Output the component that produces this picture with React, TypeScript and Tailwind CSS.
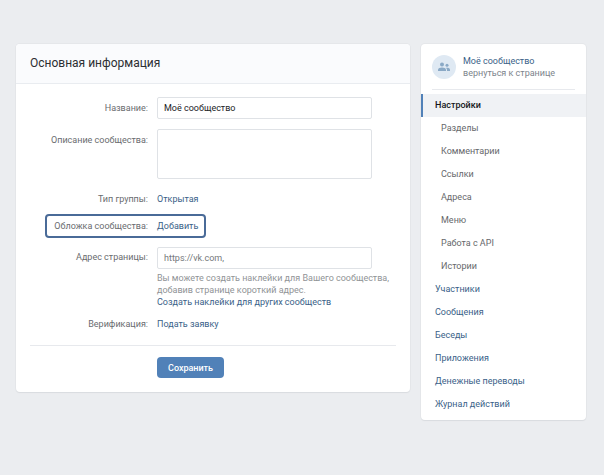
import React from 'react';

const sections = ['Разделы', 'Комментарии', 'Ссылки', 'Адреса', 'Меню', 'Работа с API', 'Истории'];

const pages = ['Участники', 'Сообщения', 'Беседы', 'Приложения', 'Денежные переводы', 'Журнал действий'];

const labelClass = 'w-[118px] shrink-0 text-right text-[#6a6c6f]';
const linkClass = 'text-[#3a5f88] hover:underline';
const fieldClass =
  'w-[215px] rounded-xs border border-[#dfe2e6] bg-white px-1.5 outline-none focus:border-[#b5bfcb]';

function UsersIcon() {
  return (
    <svg width="12" height="10" viewBox="0 0 24 20" fill="currentColor" aria-hidden="true">
      <circle cx="8" cy="5" r="4" />
      <circle cx="18" cy="6.5" r="3" />
      <path d="M0 18v-2.5C0 12.5 4 11 8 11s8 1.500 8 4.500V18z" />
      <path d="M18 18h6v-2.500c0-2.500-3-3.800-6-3.800-.8 0-1.500.1-2.200.2 1.400 1 2.200 2.200 2.200 3.800z" />
    </svg>
  );
}

function SettingsForm() {
  return (
    <main className="min-w-0 flex-1 rounded-sm bg-white shadow-[0_1px_1px_#d9dce0,0_0_0_1px_#e5e7ea]">
      <header className="rounded-t-sm border-b border-[#e9ecf0] bg-[#fafbfd] px-3.5 pt-[11px] pb-3">
        <h1 className="text-[12px] leading-4 text-[#2c2e31]">Основная информация</h1>
      </header>
      <form className="p-3.5 pt-[13px]" onSubmit={(e) => e.preventDefault()}>
        <div className="flex items-center gap-[9px]">
          <label htmlFor="name" className={labelClass}>Название:</label>
          <input id="name" type="text" defaultValue="Моё сообщество" className={`h-[22px] text-[#222427] ${fieldClass}`} />
        </div>
        <div className="mt-2.5 flex gap-[9px]">
          <label htmlFor="description" className={`pt-[5px] ${labelClass}`}>Описание сообщества:</label>
          <textarea id="description" className={`h-[50px] resize-none ${fieldClass}`} />
        </div>
        <div className="mt-3.5 flex gap-[9px]">
          <span className={labelClass}>Тип группы:</span>
          <a href="#type" className={linkClass}>Открытая</a>
        </div>
        <div className="mt-[9px] ml-[15px] flex w-fit gap-[9px] rounded-sm border-2 border-[#4a6b98] py-1 pr-1.5">
          <span className="w-[101px] shrink-0 text-right text-[#6a6c6f]">Обложка сообщества:</span>
          <a href="#cover" className={linkClass}>Добавить</a>
        </div>
        <div className="mt-[9px] flex gap-[9px]">
          <label htmlFor="address" className={`pt-1 ${labelClass}`}>Адрес страницы:</label>
          <div className="min-w-0 flex-1">
            <input id="address" type="text" defaultValue="https://vk.com," className={`block h-[22px] text-[#75787b] ${fieldClass}`} />
            <p className="mt-[3px] text-[#909396]">
              Вы можете создать наклейки для Вашего сообщества,
              <br />
              добавив странице короткий адрес.
            </p>
            <a href="#stickers" className={linkClass}>Создать наклейки для других сообществ</a>
          </div>
        </div>
        <div className="mt-2.5 flex gap-[9px]">
          <span className={labelClass}>Верификация:</span>
          <a href="#verify" className={linkClass}>Подать заявку</a>
        </div>
        <div className="mt-[15px] flex border-t border-[#e7e9ed] pt-[11px] pl-[127px]">
          <button type="submit" className="h-[21px] rounded-sm bg-[#5181b8] px-[11px] font-medium text-white">Сохранить</button>
        </div>
      </form>
    </main>
  );
}

function Sidebar() {
  return (
    <aside className="w-[165px] shrink-0 rounded-sm bg-white pb-1 shadow-[0_1px_1px_#d9dce0,0_0_0_1px_#e5e7ea]">
      <a href="#community" className="mx-[11px] flex items-center gap-[7px] border-b border-[#e7e9ed] pt-[11px] pb-2.5">
        <span className="flex size-6 shrink-0 items-center justify-center rounded-full bg-[#dfe9f3] text-[#8aa9c6]">
          <UsersIcon />
        </span>
        <span>
          <span className="block text-[#3a5f88]">Моё сообщество</span>
          <span className="block text-[#7d848c]">вернуться к странице</span>
        </span>
      </a>
      <nav className="mt-1 leading-[23px]">
        <a href="#settings" className="block border-l-2 border-[#5181b8] bg-[#f0f2f5] pl-3 font-medium text-[#15171a]">
          Настройки
        </a>
        {sections.map((item) => (
          <a key={item} href="#section" className="block pl-5 text-[#66686b] hover:bg-[#f0f2f5]">{item}</a>
        ))}
        {pages.map((item) => (
          <a key={item} href="#page" className="block pl-3.5 text-[#3a5f88] hover:bg-[#f0f2f5]">{item}</a>
        ))}
      </nav>
    </aside>
  );
}

export default function App() {
  return (
    <div className="flex min-h-screen items-start gap-[11px] bg-[#ebedf0] pt-11 pr-[18px] pb-4 pl-4 font-[Roboto,sans-serif] text-[9px] leading-3">
      <SettingsForm />
      <Sidebar />
    </div>
  );
}
